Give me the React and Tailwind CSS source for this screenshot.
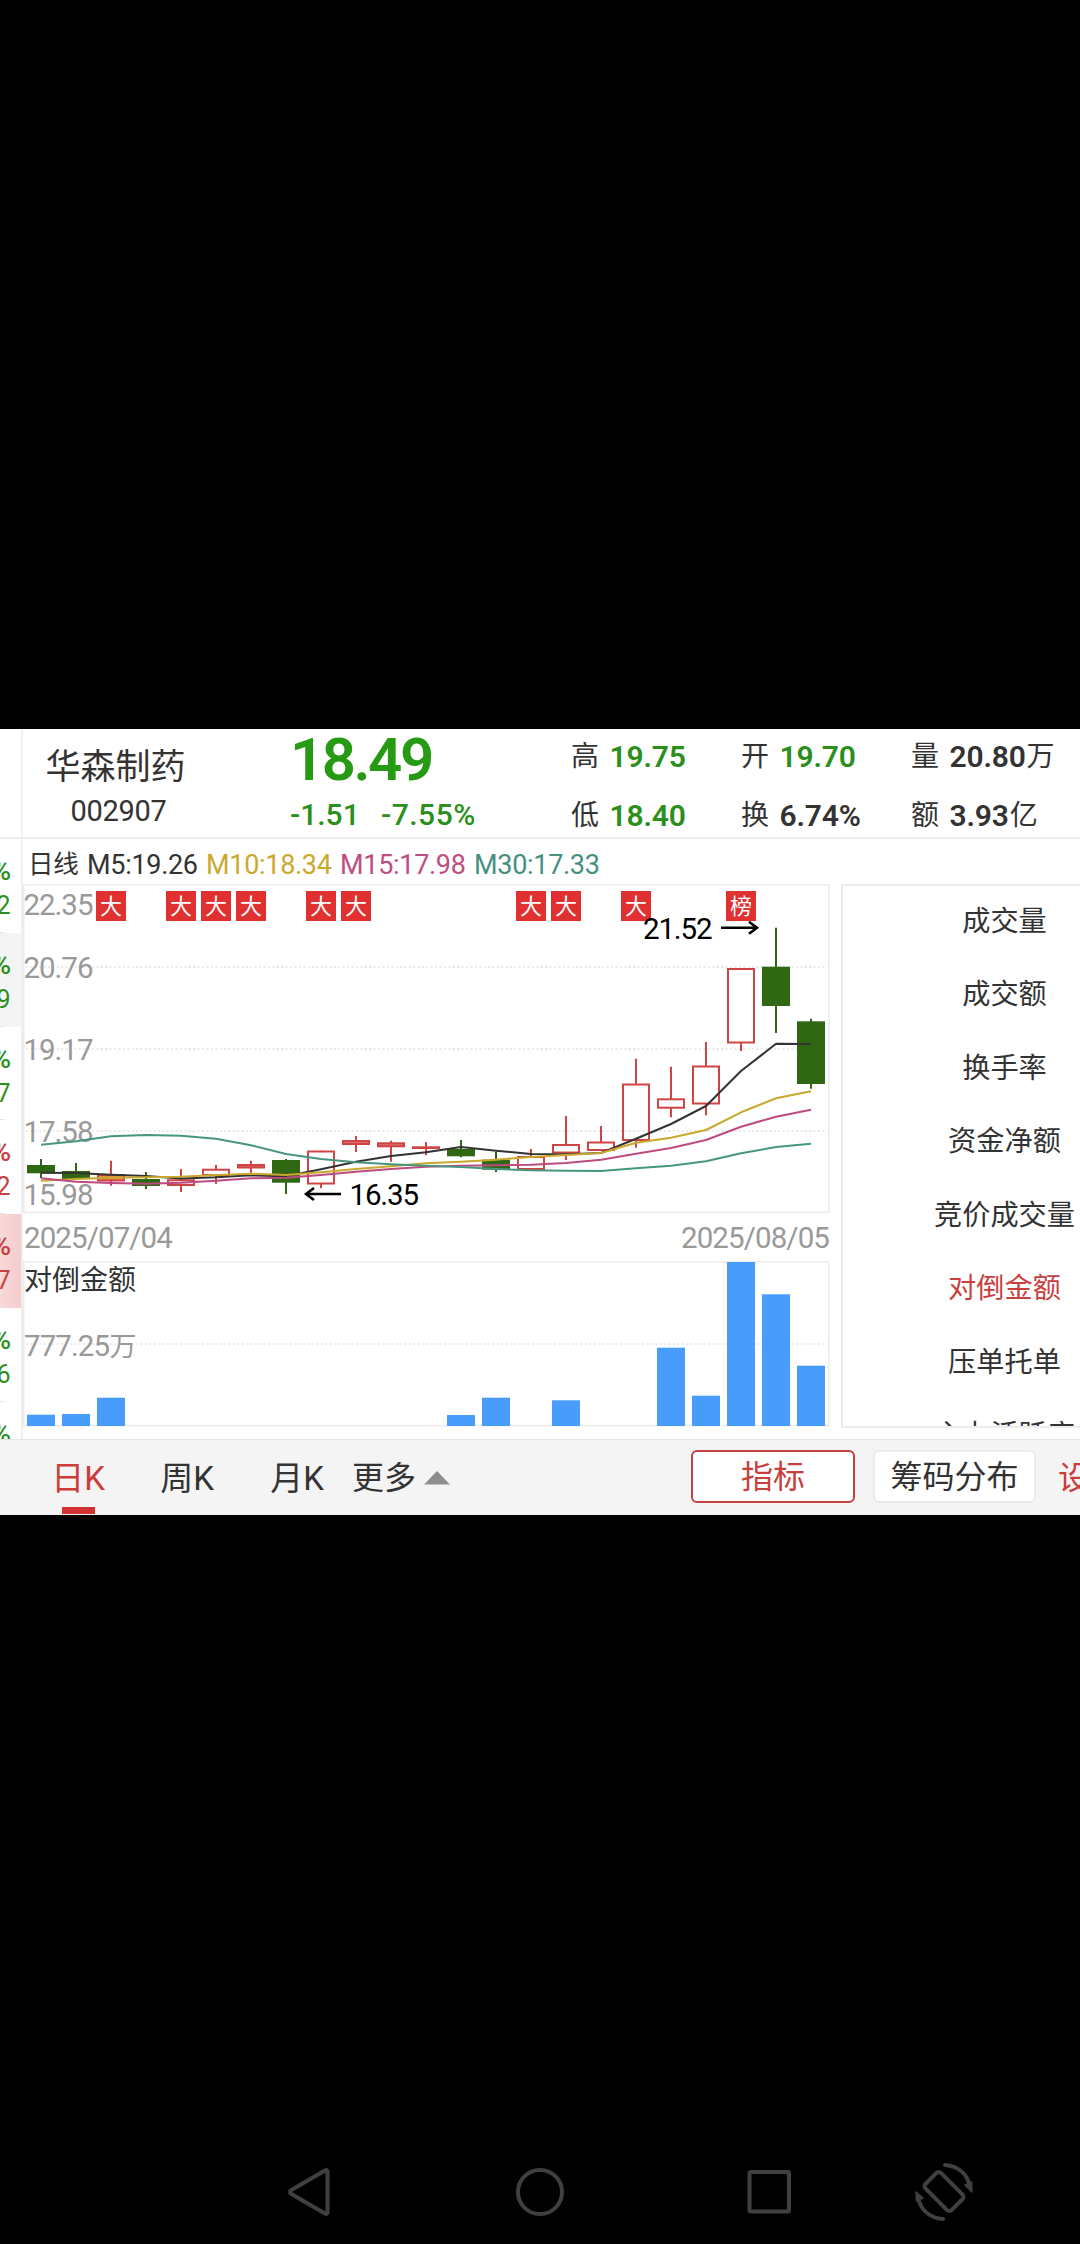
import React from 'react';

const UP = '#cf4545';
const DOWN = '#306713';

// type, body top, body bottom, wick top, wick bottom (chart pixels)
const candles = [
  ['down', 281, 289.3, 275, 294],
  ['down', 287, 295, 279, 296],
  ['up', 291, 296.5, 276.7, 301.7],
  ['down', 295, 302, 288, 305],
  ['up', 296.3, 301, 285, 308],
  ['up', 285.7, 291, 281, 300],
  ['up', 281, 283.5, 276.7, 292],
  ['down', 276, 298.7, 275, 310],
  ['up', 267.5, 299.5, 266.7, 304.3],
  ['up', 257, 260, 252, 268],
  ['up', 259.3, 262.3, 256.7, 277.7],
  ['up', 263.3, 264, 258, 271.3],
  ['down', 265, 272.3, 256, 273.3],
  ['down', 275.7, 285.7, 268, 288],
  ['up', 273, 285, 265, 285],
  ['up', 261, 268.5, 232, 276],
  ['up', 258.5, 266, 242, 267],
  ['up', 200.5, 256, 174.7, 263.7],
  ['up', 215.3, 223.7, 182.7, 233.3],
  ['up', 182.5, 219.5, 158, 231.3],
  ['up', 85, 158.5, 85, 167],
  ['down', 82.7, 122, 43.7, 149],
  ['down', 137.3, 200, 134.7, 204.7],
];

const averages = [
  { color: '#333333', ys: [288.7, 289, 290.7, 292, 294.5, 293.3, 291.3, 292.2, 285.3, 277.7, 272, 268.3, 263, 266.7, 270, 270.3, 269, 254.7, 240, 222, 187, 159.8, 160] },
  { color: '#c9a82c', ys: [296.7, 295, 293.7, 293.3, 292.7, 291, 289.7, 291, 288.3, 285, 282.3, 279.3, 277.7, 275.7, 273, 271, 269, 258.7, 253.7, 246, 228.3, 214.3, 207.3] },
  { color: '#bd4b80', ys: [294.3, 297.7, 299, 299.7, 298.7, 296.7, 294.3, 293.7, 291, 287.7, 285, 282.7, 281.7, 281.3, 280.7, 279, 275.7, 269.7, 264, 256, 242.7, 232.7, 225.7] },
  { color: '#469680', ys: [260.7, 257.3, 252.3, 251, 251.7, 254.7, 261.3, 270, 275, 278.3, 280.3, 281.7, 283, 285, 286.3, 286.7, 287, 284.3, 281.7, 277.3, 269.3, 263, 259.7] },
];

const priceLabels = [
  ['22.35', 31],
  ['20.76', 94.3],
  ['19.17', 176],
  ['17.58', 257.7],
  ['15.98', 321],
];

const badges = [[2, '大'], [4, '大'], [5, '大'], [6, '大'], [8, '大'], [9, '大'], [14, '大'], [15, '大'], [17, '大'], [20, '榜']];

const volumes = [[0, 11.3], [1, 12], [2, 28.3], [12, 11], [13, 28.3], [15, 25.7], [18, 78.3], [19, 30.3], [20, 164], [21, 131.7], [22, 60.3]];

const indicators = ['成交量', '成交额', '换手率', '资金净额', '竞价成交量', '对倒金额', '压单托单', '主力活跃度'];

const cx = (i) => 18 + i * 35;

function WatchList() {
  return (
    <div className="w-[23px] shrink-0 h-full overflow-hidden border-r-2 border-[#efefef]">
      <WatchRow digit="2" className="text-[#2e8f1e]" />
      <WatchRow digit="9" className="text-[#2e8f1e] bg-[#f4f4f4]" />
      <WatchRow digit="7" className="text-[#2e8f1e]" />
      <WatchRow digit="2" className="text-[#c8403e]" />
      <WatchRow digit="7" className="text-[#c8403e] bg-linear-to-r from-[#f9d8d8] to-[#f5cbcb]" />
      <WatchRow digit="6" className="text-[#2e8f1e]" />
      <WatchRow className="text-[#2e8f1e]" />
    </div>
  );
}

function WatchRow({ digit, className }) {
  return (
    <div className={`h-[93.8px] w-[23px] flex flex-col ${className}`}>
      <div className="w-[11px] mt-[18px] h-7 flex justify-end text-[28px] leading-7 font-medium">%</div>
      <div className="w-[10.5px] mt-[9px] h-6 flex justify-end text-[25px] leading-6">{digit}</div>
      <div className="mt-auto w-[5px] h-px bg-[#e6e6e6]"></div>
    </div>
  );
}

function Quote({ label, value, unit, green }) {
  return (
    <div className="flex items-center h-[59px] text-[28px] leading-none text-[#333]">
      <span className="w-[38.5px]">{label}</span>
      <span className={`text-[30px] font-semibold tracking-[-0.2px] ${green ? 'text-[#2c8f1c]' : 'text-[#333]'}`}>{value}</span>
      <span className="ml-px">{unit}</span>
    </div>
  );
}

function Header() {
  return (
    <div className="flex h-[110px] border-b-2 border-[#ececec]">
      <div className="w-[23px] shrink-0 border-r-2 border-[#f0f0f0]"></div>
      <div className="w-[192px] shrink-0 pl-[22.5px] pt-[21px] text-[#333]">
        <div className="text-[35px] leading-[36px]">华森制药</div>
        <div className="pl-[25px] mt-[10px] text-[29px] leading-[30px] tracking-[-0.3px]">002907</div>
      </div>
      <div className="pl-[75px] w-[356px] shrink-0">
        <div className="text-[60px] leading-[62px] font-semibold tracking-[-2.5px] text-[#279a14]">18.49</div>
        <div className="flex mt-[9px] text-[30px] leading-[30px] font-medium text-[#2c8f1c]">
          <span className="w-[91px]">-1.51</span>
          <span className="tracking-[0.5px]">-7.55%</span>
        </div>
      </div>
      <div className="grid grid-cols-[170px_170px_170px] h-[118px] -mt-[2px]">
        <Quote label="高" value="19.75" green />
        <Quote label="开" value="19.70" green />
        <Quote label="量" value="20.80" unit="万" />
        <Quote label="低" value="18.40" green />
        <Quote label="换" value="6.74%" />
        <Quote label="额" value="3.93" unit="亿" />
      </div>
    </div>
  );
}

function AverageLegend() {
  return (
    <div className="flex items-center h-[45px] pl-[5px] pt-[7px] text-[27px] leading-none tracking-[-0.3px]">
      <span className="w-[59px] text-[25.5px] text-[#333]">日线</span>
      <span className="w-[119px] text-[#333]">M5:19.26</span>
      <span className="w-[134px] text-[#cba92f]">M10:18.34</span>
      <span className="w-[134px] text-[#c04d82]">M15:17.98</span>
      <span className="text-[#469080]">M30:17.33</span>
    </div>
  );
}

function CandleChart() {
  return (
    <svg width="807" height="330" viewBox="0 0 807 330" className="block shrink-0">
      <rect x="0.7" y="0.7" width="805" height="327.6" fill="#fff" stroke="#ececec" strokeWidth="1.6" />
      {[83, 165, 247].map((y) => (
        <line key={y} x1="3" x2="804" y1={y} y2={y} stroke="#e9e9e9" strokeWidth="2" strokeDasharray="2 2.4" />
      ))}
      {priceLabels.map(([t, y]) => (
        <text key={t} x="0.5" y={y} fontSize="29.5" fill="#999" textLength="70">{t}</text>
      ))}
      {candles.map(([type, top, bottom, high, low], i) =>
        type === 'down' ? (
          <g key={i}>
            <line x1={cx(i)} x2={cx(i)} y1={high} y2={low} stroke={DOWN} strokeWidth="2" />
            <rect x={cx(i) - 14} y={top} width="28" height={bottom - top} fill={DOWN} />
          </g>
        ) : (
          <g key={i} stroke={UP} strokeWidth="2">
            <line x1={cx(i)} x2={cx(i)} y1={high} y2={top} />
            <line x1={cx(i)} x2={cx(i)} y1={bottom} y2={low} />
            <rect x={cx(i) - 13} y={top} width="26" height={bottom - top} fill={i === 2 ? '#ee8a4a' : i === 6 || i === 9 || i === 10 ? '#e07070' : 'none'} />
          </g>
        )
      )}
      {averages.map(({ color, ys }) => (
        <polyline key={color} points={ys.map((y, i) => `${cx(i)},${y}`).join(' ')} fill="none" stroke={color} strokeWidth="2" strokeLinejoin="round" />
      ))}
      {badges.map(([i, t]) => (
        <g key={i}>
          <rect x={cx(i) - 15} y="7" width="30" height="30" fill="#e03030" />
          <text x={cx(i)} y="30" fontSize="22" fill="#fff" textAnchor="middle">{t}</text>
        </g>
      ))}
      <g fill="none" stroke="#000" strokeWidth="2.6">
        <path d="M283 310h35M291 304l-8 6 8 6" />
        <path d="M698 43.7h36M726 37.7l8 6-8 6" />
      </g>
      <text x="326.500" y="321" fontSize="29.5" textLength="69.5">16.35</text>
      <text x="620" y="54.5" fontSize="29.5" textLength="69.5">21.52</text>
    </svg>
  );
}

function AmountChart() {
  return (
    <svg width="807" height="166" viewBox="0 0 807 166" className="block shrink-0">
      <rect x="0.7" y="0.7" width="805" height="164" fill="#fff" stroke="#ececec" strokeWidth="1.6" />
      <line x1="3" x2="804" y1="83" y2="83" stroke="#e9e9e9" strokeWidth="2" strokeDasharray="2 2.4" />
      {volumes.map(([i, h]) => (
        <rect key={i} x={cx(i) - 14} y={165 - h} width="28" height={h} fill="#489cfb" />
      ))}
      <text x="1" y="29" fontSize="28" fill="#333">对倒金额</text>
      <text x="1" y="94.8" fontSize="29.5" fill="#999" textLength="86">777.25</text>
      <text x="86.5" y="94.5" fontSize="27" fill="#999">万</text>
    </svg>
  );
}

function IndicatorList() {
  return (
    <div className="ml-[11px] mt-[45px] h-[544px] w-[328px] shrink-0 overflow-hidden border-2 border-[#ededed] text-[28.2px] text-[#333]">
      <div className="-mt-px -ml-px">
        {indicators.map((name) => (
          <div key={name} className={`h-[73.5px] flex items-center justify-center leading-none ${name === '对倒金额' ? 'text-[#c8403e]' : ''}`}>
            {name}
          </div>
        ))}
      </div>
    </div>
  );
}

function Toolbar() {
  return (
    <div className="flex h-[76px] border-t border-[#e4e4e4] bg-[#f4f4f4] text-[32px] leading-none text-[#333] overflow-hidden">
      <div className="flex flex-col items-center w-[108px] shrink-0 ml-[24px] text-[#cc3c3a]">
        <div className="h-[67px] flex items-center pt-[9px] text-[33px]">日K</div>
        <div className="w-[33px] h-[7px] bg-[#d23232]"></div>
      </div>
      <div className="w-[110px] shrink-0 h-[67px] flex items-center justify-center pt-[9px] text-[33px]">周K</div>
      <div className="w-[110px] shrink-0 h-[67px] flex items-center justify-center pt-[9px] text-[33px]">月K</div>
      <div className="w-[339px] shrink-0 h-[67px] flex items-center pt-[9px]">
        更多
        <svg width="26" height="14" viewBox="0 0 26 14" className="ml-[8px]">
          <path d="M13 0L26 13.500H0z" fill="#8e8e8e" />
        </svg>
      </div>
      <div className="mt-[10px] w-[164px] h-[53px] shrink-0 rounded-md border-2 border-[#c44242] bg-white text-[#c8403e] flex items-center justify-center">指标</div>
      <div className="mt-[10px] ml-[18px] w-[163px] h-[53px] shrink-0 rounded-md border-2 border-[#ebebeb] bg-white flex items-center justify-center">筹码分布</div>
      <div className="h-[67px] shrink-0 flex items-center pt-[9px] ml-[22px] text-[#cc3c3a]">设置</div>
    </div>
  );
}

function SystemNav() {
  return (
    <svg width="1080" height="104" viewBox="0 2140 1080 104" fill="none" stroke="#404040" strokeWidth="4" strokeLinejoin="round" strokeLinecap="round" className="block">
      <path d="M327.500 2172.500v39.500q0 3-2.500 1.500l-33.500-19.500q-3-2 0-4l33.500-19.500q2.500-1.500 2.500 2z" />
      <circle cx="540" cy="2192" r="22" />
      <rect x="749.500" y="2172" width="39.500" height="39.500" rx="1.500" />
      <rect x="925.500" y="2180.500" width="37" height="22" rx="3.500" transform="rotate(45 944 2191.500)" />
      <path d="M945 2165c14 1 23 10 25 22" />
      <path d="M943 2219c-14-1-23-10-25-22" />
      <path d="M965 2185l6.500-3 .5 10zM923 2198l-6.500 3-.5-9z" fill="#404040" strokeWidth="1.500" />
    </svg>
  );
}

export default function App() {
  return (
    <div className="w-[1080px] h-[2244px] bg-black flex flex-col overflow-hidden font-['Roboto','Noto_Sans_CJK_SC',sans-serif]">
      <div className="mt-[729px] h-[786px] shrink-0 bg-white flex flex-col overflow-hidden">
        <Header />
        <div className="flex h-[600px] shrink-0 overflow-hidden">
          <WatchList />
          <div className="flex flex-col w-[807px] shrink-0">
            <AverageLegend />
            <CandleChart />
            <div className="h-[47px] flex justify-between items-center px-px pt-[3px] text-[29.5px] leading-none tracking-[-0.9px] text-[#999]">
              <span>2025/07/04</span>
              <span>2025/08/05</span>
            </div>
            <AmountChart />
          </div>
          <IndicatorList />
        </div>
        <Toolbar />
      </div>
      <div className="mt-auto">
        <SystemNav />
      </div>
    </div>
  );
}
